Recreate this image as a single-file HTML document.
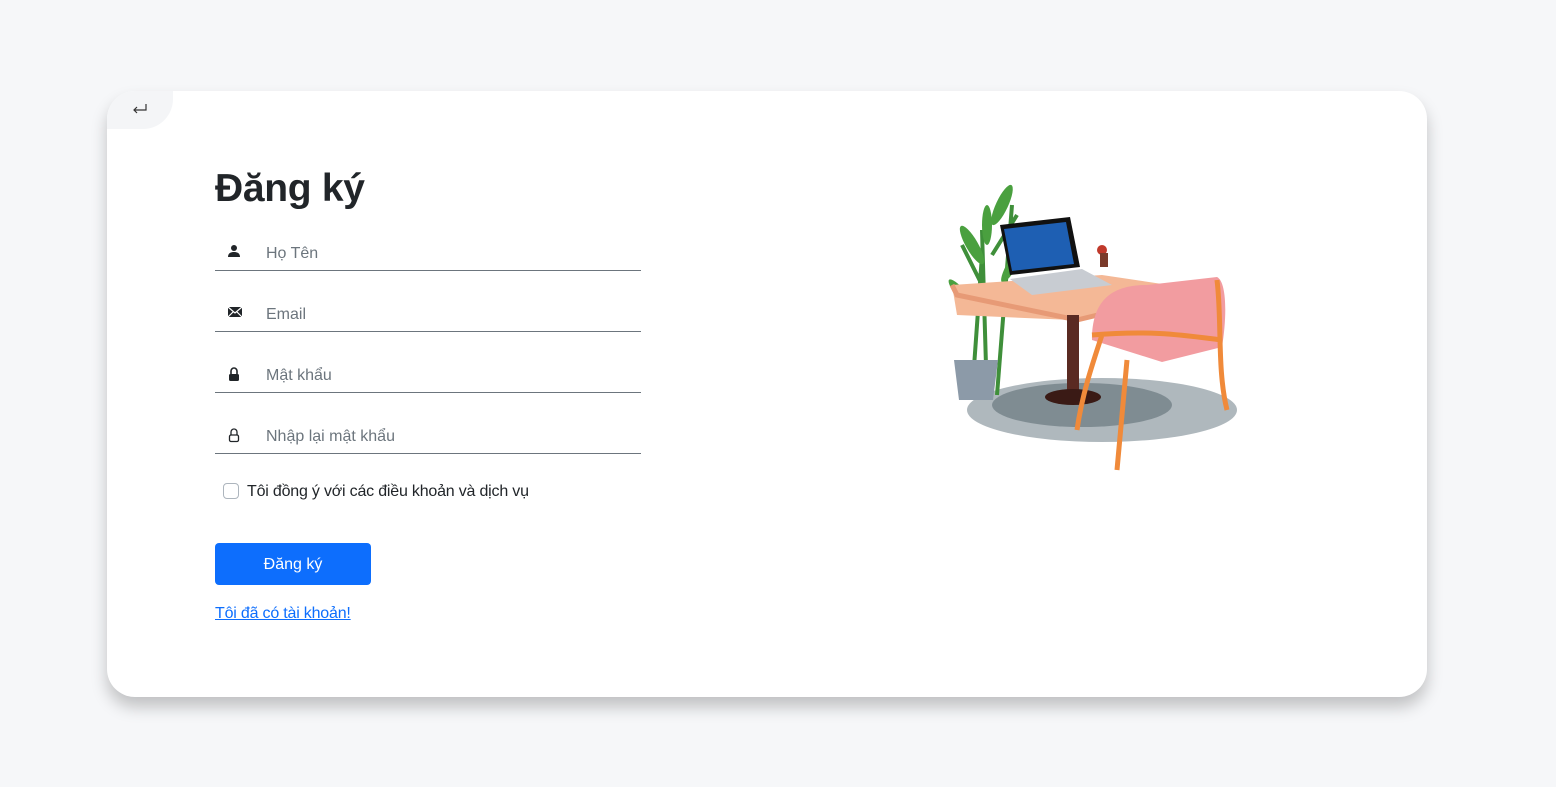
<!DOCTYPE html>
<html><head><meta charset="utf-8"><style>
*{box-sizing:border-box;margin:0;padding:0}
body{width:1556px;height:787px;background:#f6f7f9;font-family:"Liberation Sans",sans-serif;position:relative;overflow:hidden}
.card{position:absolute;left:107px;top:91px;width:1320px;height:606px;background:#fff;border-radius:28px;box-shadow:0 10px 16px rgba(0,0,0,.22);overflow:hidden}
.back{position:absolute;left:0;top:0;width:66px;height:38px;background:#f4f5f7;border-bottom-right-radius:30px}
h1{position:absolute;left:108px;top:76px;font-size:39px;font-weight:bold;color:#212529;letter-spacing:-0.3px}
.f{position:absolute;left:108px;width:426px;height:37px;border-bottom:1.5px solid #6c757d}
.f svg{position:absolute;left:12px;top:10px}
.f span{position:absolute;left:51px;top:11px;font-size:16px;color:#6c757d}
.chk{position:absolute;left:116px;top:392px;width:16px;height:16px;border:1px solid #adb5bd;border-radius:4px}
.lbl{position:absolute;left:140px;top:392px;font-size:16px;color:#212529;letter-spacing:-0.2px}
.btn{position:absolute;left:108px;top:452px;width:156px;height:42px;background:#0d6efd;border-radius:4px;color:#fff;font-size:16px;text-align:center;line-height:44px}
.lnk{position:absolute;left:108px;top:514px;font-size:16px;color:#0d6efd;text-decoration:underline;letter-spacing:-0.2px}
</style></head><body>
<div class="card">
<div class="back"><svg style="position:absolute;left:25px;top:12px" width="16" height="14" viewBox="0 0 16 14"><path d="M14 1v6H2M5 4L2 7l3 3" fill="none" stroke="#333" stroke-width="1.2"/></svg></div>
<h1>Đăng ký</h1>
<div class="f" style="top:143px"><svg width="14" height="14" viewBox="0 0 14 14"><circle cx="7" cy="4" r="3" fill="#212529"/><path d="M1 13c0-4 3-5 6-5s6 1 6 5z" fill="#212529"/></svg><span>Họ Tên</span></div>
<div class="f" style="top:204px"><svg width="16" height="14" viewBox="0 0 16 14"><rect x="1" y="2" width="14" height="10" fill="#212529"/><path d="M1 2l7 6 7-6M1 12l5-5M15 12l-5-5" stroke="#fff" stroke-width="1.2" fill="none"/></svg><span>Email</span></div>
<div class="f" style="top:265px"><svg width="14" height="16" viewBox="0 0 14 16"><path d="M4 8V5a3 3 0 016 0v3" stroke="#212529" stroke-width="1.6" fill="none"/><rect x="2" y="8" width="10" height="7" rx="1.5" fill="#212529"/></svg><span>Mật khẩu</span></div>
<div class="f" style="top:326px"><svg width="14" height="16" viewBox="0 0 14 16"><path d="M4 8V5a3 3 0 016 0v3" stroke="#212529" stroke-width="1.3" fill="none"/><rect x="2.5" y="8" width="9" height="6.5" rx="1.5" stroke="#212529" stroke-width="1.3" fill="none"/></svg><span>Nhập lại mật khẩu</span></div>
<div class="chk"></div><div class="lbl">Tôi đồng ý với các điều khoản và dịch vụ</div>
<div class="btn">Đăng ký</div>
<div class="lnk">Tôi đã có tài khoản!</div>
<svg style="position:absolute;left:835px;top:74px" width="300" height="312" viewBox="0 0 300 312">
<ellipse cx="160" cy="245" rx="135" ry="32" fill="#6d7d86" opacity=".55"/>
<ellipse cx="140" cy="240" rx="90" ry="22" fill="#4f6068" opacity=".5"/>
<path d="M30 230l10-140M45 235l-5-170M55 230l15-190M40 120l-20-40M50 90l25-40" stroke="#3f8f3a" stroke-width="4" fill="none"/>
<g fill="#4aa03f"><ellipse cx="30" cy="80" rx="6" ry="22" transform="rotate(-30 30 80)"/><ellipse cx="60" cy="40" rx="6" ry="22" transform="rotate(25 60 40)"/><ellipse cx="20" cy="130" rx="5" ry="20" transform="rotate(-40 20 130)"/><ellipse cx="70" cy="100" rx="5" ry="20" transform="rotate(30 70 100)"/><ellipse cx="45" cy="60" rx="5" ry="20"/></g>
<path d="M12 195h44l-5 40H17z" fill="#8c9aa8"/>
<path d="M10 120l150-10 100 15-130 30-115-5z" fill="#f4b896"/>
<path d="M10 120l5 10 120 25 125-30" stroke="#e79a76" stroke-width="5" fill="none"/>
<rect x="125" y="150" width="12" height="80" fill="#5a2a22"/>
<ellipse cx="131" cy="232" rx="28" ry="8" fill="#3a1a15"/>
<path d="M58 60l70-8 10 50-70 8z" fill="#111"/><path d="M62 64l62-7 8 42-62 7z" fill="#1e5fb3"/>
<path d="M68 114l72-10 30 16-80 10z" fill="#c8ccd2"/>
<path d="M150 175c0-40 20-55 55-55l70-8c10 5 10 40 5 70l-60 15z" fill="#f29ca0"/>
<path d="M160 170c-10 30-20 60-25 95M185 195l-10 110M275 115c5 40 0 90 10 130M150 170c60-5 90 0 130 5" stroke="#f08a3a" stroke-width="5" fill="none"/>
<circle cx="160" cy="85" r="5" fill="#c0392b"/><rect x="158" y="88" width="8" height="14" fill="#7a3a2a"/>
</svg>
</div>
</body></html>
